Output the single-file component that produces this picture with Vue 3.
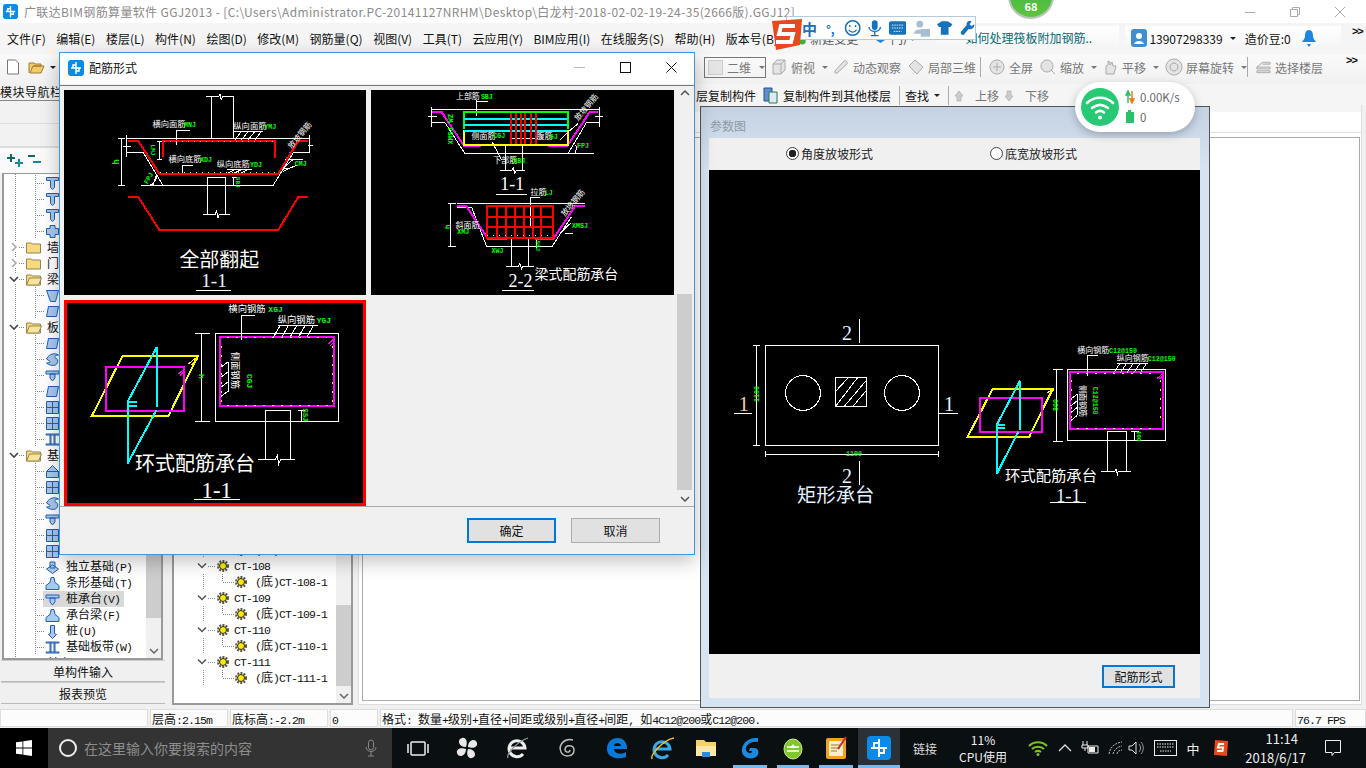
<template>
  <div class="app">
    <div class="titlebar">
      <svg class="logo" viewBox="0 0 16 16"><rect width="16" height="16" rx="3" fill="#0a8be8"/><path d="M8 2v12M3 8h10M8 5H5v3M8 11h3V8" fill="none" stroke="#fff" stroke-width="1.5"/></svg>
      <span class="title-text">广联达BIM钢筋算量软件 GGJ2013 - [C:\Users\Administrator.PC-20141127NRHM\Desktop\白龙村-2018-02-02-19-24-35(2666版).GGJ12]</span>
      <div class="win-btns">
        <svg width="12" height="12" viewBox="0 0 12 12"><path d="M1 6.500h10" stroke="#aaa"/></svg>
        <svg width="12" height="12" viewBox="0 0 12 12"><path d="M1.500 3.500h7v7h-7zM3.500 3.500v-2h7v7h-2" fill="none" stroke="#aaa"/></svg>
        <svg width="12" height="12" viewBox="0 0 12 12"><path d="M1 1l10 10M11 1L1 11" stroke="#aaa"/></svg>
      </div>
    </div>

    <div class="menubar">
      <span v-for="m in menus" :key="m" class="menu-item">{{ m }}</span>
      <span class="menu-item new-change">
        <svg width="14" height="14" viewBox="0 0 14 14"><path d="M2 1h8l2 2v9H2z" fill="#e8eef5" stroke="#8aa"/><circle cx="9" cy="10" r="3.500" fill="#3fae3a"/></svg>
        新建变更
      </span>
      <span class="menu-item portal">
        <svg width="11" height="12" viewBox="0 0 11 12"><path d="M1 1h9v7l-4.500 3L1 8z" fill="#1c86e0"/></svg>
        门户
      </span>
      <div class="news">如何处理筏板附加钢筋..</div>
      <div class="account">
        <svg width="16" height="18" viewBox="0 0 16 18"><rect width="16" height="18" rx="3" fill="#3f8fd0"/><circle cx="8" cy="7" r="3" fill="#fff"/><path d="M3 15c1-4 9-4 10 0z" fill="#fff"/></svg>
        <span class="phone">13907298339</span>
        <i class="caret"></i>
        <span class="beans">造价豆:0</span>
        <svg class="bell" width="14" height="18" viewBox="0 0 14 18"><path d="M7 1c-3 0-4 3-4 6 0 3-2 4-3 6h14c-1-2-3-3-3-6 0-3-1-6-4-6zM5 15h4l-2 3z" fill="#1c86e0"/></svg>
      </div>
      <span class="more">&gt;&gt;</span>
    </div>

    <div class="toolbar">
      <svg class="tool-new" width="14" height="16" viewBox="0 0 14 16"><path d="M1.500 1h8l3 3v11h-11z" fill="#fff" stroke="#777"/></svg>
      <svg class="tool-open" width="18" height="16" viewBox="0 0 18 16"><path d="M1 14V4h5l1 1h6v2H5L2 14h11l3-7H5" fill="#f2cb6b" stroke="#a07c2c"/></svg>
      <i class="caret"></i>
      <div class="combo"><span class="combo-box"></span><span>二维</span><i class="caret gray"></i></div>
      <div v-for="t in tools" :key="t.label" class="tool" :style="{ width: t.w + 'px' }">
        <svg width="18" height="18" viewBox="0 0 18 18"><path :d="t.icon" fill="#e4e4e4" stroke="#aaa"/></svg>
        <span>{{ t.label }}</span>
        <i v-if="t.caret" class="caret gray"></i>
        <b v-if="t.sep" class="sep"></b>
      </div>
      <span class="more">&gt;&gt;</span>
    </div>

    <div class="work">
      <aside class="nav">
        <div class="nav-title">模块导航栏</div>
        <div class="nav-band"></div>
        <div class="nav-band"></div>
        <div class="nav-tools">
          <svg width="40" height="18" viewBox="0 0 40 18">
            <path d="M7 3v8M3 7h8" stroke="#0b6b5e" stroke-width="2"/>
            <path d="M15 8v8M11 12h8" stroke="#118a9a" stroke-width="2"/>
            <path d="M24 5h7" stroke="#0b6b5e" stroke-width="2"/>
            <path d="M29 11h8" stroke="#118a9a" stroke-width="2"/>
          </svg>
        </div>
        <div class="nav-tree">
          <div v-for="r in navRows" :key="r.id" class="row" :class="{ child: !r.folder, active: r.active }">
            <template v-if="r.folder">
              <svg class="arrow" width="10" height="10" viewBox="0 0 10 10">
                <path :d="r.open ? 'M1 3l4 4 4-4' : 'M3 1l4 4-4 4'" fill="none" :stroke="r.open ? '#444' : '#aaa'" stroke-width="1.6"/>
              </svg>
              <span class="hline short"></span>
              <svg width="16" height="13" viewBox="0 0 16 13">
                <path d="M.5 12V2h5l1 1h8v9z" fill="#f6d980" stroke="#9a8450"/>
                <path v-if="r.open" d="M.5 12l3-7h12l-3 7z" fill="#fbe49c" stroke="#9a8450"/>
              </svg>
              <span class="row-text folder-text">{{ r.label }}</span>
            </template>
            <template v-else>
              <span class="hline"></span>
              <svg class="row-icon" width="15" height="15" viewBox="0 0 15 15"><path :d="r.icon" fill="#a9c9ee" stroke="#2160b4"/></svg>
              <span class="row-text"><span v-for="(s, i) in segs(r.label)" :key="i" :class="{ lat: s.lat }">{{ s.t }}</span></span>
            </template>
          </div>
          <div class="scroll nav-scroll"><i class="thumb"></i><svg width="10" height="6" viewBox="0 0 10 6"><path d="M1 1l4 4 4-4" fill="none" stroke="#666" stroke-width="1.5"/></svg></div>
        </div>
        <div class="nav-tab">单构件输入</div>
        <div class="nav-tab">报表预览</div>
      </aside>

      <main class="main">
        <div class="toolbar2">
          <span class="t2-first">层复制构件</span>
          <svg class="copy-icon" width="15" height="17" viewBox="0 0 15 17"><path d="M1 1h8v13H1z" fill="#5d8fd2" stroke="#2c4f86"/><path d="M6 5h8v11H6z" fill="#dde9f7" stroke="#2a7a4a"/></svg>
          <span>复制构件到其他楼层</span>
          <b class="sep2"></b>
          <span>查找</span><i class="caret"></i>
          <b class="sep2"></b>
          <svg width="10" height="12" viewBox="0 0 10 12"><path d="M5 1l4 5H7v5H3V6H1z" fill="#ccc" stroke="#bbb"/></svg>
          <span class="disabled">上移</span>
          <svg width="10" height="12" viewBox="0 0 10 12"><path d="M5 11l4-5H7V1H3v5H1z" fill="#ccc" stroke="#bbb"/></svg>
          <span class="disabled">下移</span>
        </div>
        <div class="content">
          <div class="tree2">
            <div v-for="c in ctRows" :key="c.label" class="ct-row" :class="{ sub: c.sub }">
              <svg v-if="!c.sub" class="ct-caret" width="10" height="8" viewBox="0 0 10 8"><path d="M1 1.500l4 4 4-4" fill="none" stroke="#555" stroke-width="1.5"/></svg>
              <span class="ct-dots"></span>
              <svg width="12" height="12" viewBox="0 0 12 12"><circle cx="6" cy="6" r="3.500" fill="#ffe900" stroke="#222" stroke-width="1"/><circle cx="6" cy="6" r="5" fill="none" stroke="#554" stroke-width="2" stroke-dasharray="2 1.200"/></svg>
              <span class="ct-label"><span v-for="(s, i) in segs(c.label)" :key="i" :class="{ lat: s.lat }">{{ s.t }}</span></span>
            </div>
            <div class="scroll ct-scroll"><i class="thumb"></i><svg width="10" height="6" viewBox="0 0 10 6"><path d="M1 1l4 4 4-4" fill="none" stroke="#666" stroke-width="1.5"/></svg></div>
          </div>
          <div class="canvas">
            <div class="canvas-top"></div>
            <div class="canvas-box"></div>
          </div>
        </div>
      </main>
    </div>

    <div class="statusbar">
      <div v-for="c in statusCells" :key="c.cls" class="cell" :class="c.cls">
        <span v-for="(s, i) in segs(c.text)" :key="i" :class="{ lat: s.lat }">{{ s.t }}</span>
      </div>
    </div>

    <div class="taskbar">
      <div class="start">
        <svg width="16" height="16" viewBox="0 0 16 16"><path d="M0 2.300l6.500-.9v6.200H0zM7.300 1.300L16 0v7.600H7.300zM0 8.400h6.500v6.200L0 13.700zM7.300 8.400H16V16l-8.700-1.300z" fill="#fff"/></svg>
      </div>
      <div class="search">
        <svg width="20" height="20" viewBox="0 0 20 20"><circle cx="10" cy="10" r="8" fill="none" stroke="#eee" stroke-width="2"/></svg>
        <span class="search-text">在这里输入你要搜索的内容</span>
        <svg class="mic" width="12" height="18" viewBox="0 0 12 18"><rect x="3.500" y="1" width="5" height="10" rx="2.500" fill="none" stroke="#888"/><path d="M1 8c0 6 10 6 10 0M6 13v4M3 17h6" fill="none" stroke="#888"/></svg>
      </div>
      <div class="task-icons">
        <div v-for="t in taskIcons" :key="t.id" class="task-icon" :class="{ running: t.running, current: t.current }" :style="{ width: t.w + 'px' }">
          <svg width="26" height="26" viewBox="0 0 26 26" v-html="t.svg"></svg>
        </div>
      </div>
      <div class="tray">
        <span class="tray-link">链接</span>
        <div class="cpu"><span>11%</span><span>CPU使用</span></div>
        <svg class="t1" width="20" height="16" viewBox="0 0 20 16"><path d="M1 6c5-5 13-5 18 0M4 9c3-3 9-3 12 0M7 12c2-1.500 4-1.500 6 0" fill="none" stroke="#7cc320" stroke-width="2"/><circle cx="10" cy="14.500" r="1.500" fill="#7cc320"/></svg>
        <svg class="t2" width="14" height="10" viewBox="0 0 14 10"><path d="M1 8l6-6 6 6" fill="none" stroke="#ddd" stroke-width="1.300"/></svg>
        <svg class="t3" width="18" height="16" viewBox="0 0 18 16"><path d="M2 1v4M6 1v4M1 5h6v3H1zM4 8v3M7 6h10v7H7z" fill="none" stroke="#eee"/><rect x="8" y="7" width="6" height="5" fill="#eee"/></svg>
        <svg class="t4" width="18" height="16" viewBox="0 0 18 16"><path d="M2 14C3 7 8 3 15 2M6 14c1-4 4-7 9-8M10 14c0-2 2-4 5-4" fill="none" stroke="#bbb" stroke-dasharray="2 1"/></svg>
        <svg class="t5" width="16" height="16" viewBox="0 0 16 16"><path d="M1 6h3l4-4v12l-4-4H1z" fill="none" stroke="#ddd"/><path d="M11 4c2 2 2 6 0 8M13 2c3 3 3 9 0 12" fill="none" stroke="#999"/></svg>
        <svg class="t6" width="23" height="16" viewBox="0 0 23 16"><rect x=".5" y=".5" width="22" height="15" fill="none" stroke="#eee"/><path d="M3 4h17M3 7h17M6 11h11" stroke="#eee" stroke-dasharray="1.500 1"/></svg>
        <span class="tray-ime">中</span>
        <svg class="t7" width="16" height="18" viewBox="0 0 16 18"><path d="M2 1l13 1-1 15-13-1z" fill="#e8481c"/><path d="M11 5H6L5 8.500h5L9.500 12H4" fill="none" stroke="#fff" stroke-width="2"/></svg>
        <div class="clock"><span class="clock-time">11:14</span><span>2018/6/17</span></div>
        <svg class="notify" width="16" height="17" viewBox="0 0 16 17"><path d="M.5.500h15v12H9.500L7 15.500v-3H.5z" fill="none" stroke="#eee"/></svg>
      </div>
    </div>

    <!-- floating bits on top of the main window -->
    <div class="badge"><span>68</span></div>

    <div class="ime">
      <svg class="ime-logo" width="34" height="36" viewBox="0 0 34 36"><path d="M2 4l30-2-2 26L6 33z" fill="#e8481c"/><path d="M25 9H11L9 17h14l-2 8H6" fill="none" stroke="#fff" stroke-width="4"/></svg>
      <span class="ime-zh">中</span>
      <span class="ime-punct">°,</span>
      <svg width="18" height="18" viewBox="0 0 18 18"><circle cx="9" cy="9" r="7.500" fill="none" stroke="#1572bd" stroke-width="1.600"/><path d="M6 6v2M12 6v2M5 11c2 3 6 3 8 0" fill="none" stroke="#1572bd" stroke-width="1.400"/></svg>
      <svg width="14" height="18" viewBox="0 0 14 18"><rect x="4" y="1" width="6" height="10" rx="3" fill="#1572bd"/><path d="M1 8c0 6 12 6 12 0M7 13v4M3 17h8" fill="none" stroke="#1572bd" stroke-width="1.400"/></svg>
      <svg width="18" height="14" viewBox="0 0 18 14"><rect width="18" height="14" rx="2" fill="#1572bd"/><path d="M3 4h12M3 7h12M5 10.500h8" stroke="#fff" stroke-dasharray="1.500 1"/></svg>
      <svg width="18" height="18" viewBox="0 0 18 18"><circle cx="7" cy="5" r="3.500" fill="#a7bfd2"/><path d="M1 15c0-6 12-6 12 0z" fill="#a7bfd2"/><rect x="8" y="10" width="10" height="8" fill="#a7bfd2"/></svg>
      <svg width="16" height="16" viewBox="0 0 16 16"><path d="M5 1h6l5 3-2 3h-2v8H4V7H2L0 4z" fill="#1572bd"/></svg>
      <svg width="16" height="16" viewBox="0 0 16 16"><path d="M15 4l-3 2-2-2 2-3c-3-1-6 1-5 4L1 12c-1 2 1 4 3 3l5-6c4 1 6-2 6-5z" fill="#1572bd"/></svg>
    </div>

    <div class="net">
      <div class="net-circle">
        <svg width="30" height="26" viewBox="0 0 30 26"><path d="M2 9c7-7 19-7 26 0M7 14c5-4 11-4 16 0M11 18.500c2.500-2 5.500-2 8 0" fill="none" stroke="#fff" stroke-width="2.600" stroke-linecap="round"/><circle cx="15" cy="23.500" r="2" fill="#fff"/></svg>
      </div>
      <div class="net-info">
        <div class="net-line"><svg width="10" height="14" viewBox="0 0 10 14"><path d="M3 3v10M1 5l2-4 2 4z" stroke="#27c26c" fill="#27c26c" stroke-width="1.500"/><path d="M7 1v10M5 9l2 4 2-4z" stroke="#f07a1e" fill="#f07a1e" stroke-width="1.500"/></svg><span>0.00K/s</span></div>
        <div class="net-line"><svg width="10" height="14" viewBox="0 0 10 14"><rect x="1" y="2" width="8" height="11" fill="#27c26c"/><rect x="3" width="3" height="2" fill="#27c26c"/></svg><span>0</span></div>
      </div>
    </div>

    <section class="param">
      <div class="param-title">参数图</div>
      <div class="param-body">
        <div class="radios">
          <label class="radio on"><i></i>角度放坡形式</label>
          <label class="radio"><i></i>底宽放坡形式</label>
        </div>
        <svg class="param-draw" viewBox="-33 -420 1473 1452">
          <path v-for="(p, i) in paramDraw.paths" :key="i" :d="p[1]" :class="['ln', p[0]]" />
          <text v-for="(t, i) in paramDraw.texts" :key="'t' + i" :x="t.x" :y="t.y" :font-size="t.s" :class="t.c" :text-anchor="t.a" :transform="t.r ? `rotate(${t.r} ${t.x} ${t.y})` : null">{{ t.v }}</text>
        </svg>
        <div class="param-foot"><button class="btn primary small">配筋形式</button></div>
      </div>
    </section>

    <section class="dialog">
      <header class="dlg-head">
        <svg class="logo" viewBox="0 0 16 16"><rect width="16" height="16" rx="3" fill="#0a8be8"/><path d="M8 2v12M3 8h10M8 5H5v3M8 11h3V8" fill="none" stroke="#fff" stroke-width="1.500"/></svg>
        <span class="dlg-title">配筋形式</span>
        <div class="dlg-btns">
          <svg width="11" height="11" viewBox="0 0 11 11"><path d="M0 5.500h11" stroke="#bbb"/></svg>
          <svg width="11" height="11" viewBox="0 0 11 11"><rect x=".5" y=".5" width="10" height="10" fill="none" stroke="#111"/></svg>
          <svg width="11" height="11" viewBox="0 0 11 11"><path d="M.5.500l10 10M10.500.500l-10 10" stroke="#111"/></svg>
        </div>
      </header>
      <div class="dlg-body">
        <div class="gallery">
          <div v-for="(d, n) in drawings" :key="n" class="shape" :class="{ picked: d.picked }">
            <svg :viewBox="d.view">
              <path v-for="(p, i) in d.paths" :key="i" :d="p[1]" :class="['ln', p[0]]" />
              <text v-for="(t, i) in d.texts" :key="'t' + i" :x="t.x" :y="t.y" :font-size="t.s" :class="t.c" :text-anchor="t.a" :transform="t.r ? `rotate(${t.r} ${t.x} ${t.y})` : null">{{ t.v }}</text>
            </svg>
          </div>
        </div>
        <div class="dlg-scroll">
          <svg width="10" height="6" viewBox="0 0 10 6"><path d="M1 5l4-4 4 4" fill="none" stroke="#555" stroke-width="1.500"/></svg>
          <i class="dlg-thumb"></i>
          <svg width="10" height="6" viewBox="0 0 10 6"><path d="M1 1l4 4 4-4" fill="none" stroke="#555" stroke-width="1.500"/></svg>
        </div>
      </div>
      <footer class="dlg-foot">
        <button class="btn primary">确定</button>
        <button class="btn">取消</button>
      </footer>
    </section>
  </div>
</template>

<script setup>
const menus = ['文件(F)', '编辑(E)', '楼层(L)', '构件(N)', '绘图(D)', '修改(M)', '钢筋量(Q)', '视图(V)', '工具(T)', '云应用(Y)', 'BIM应用(I)', '在线服务(S)', '帮助(H)', '版本号(B)']

const tools = [
  { label: '俯视', w: 62, caret: true, icon: 'M3 6l4-4h8v10l-4 4H3zM3 6h8v10M11 6l4-4' },
  { label: '动态观察', w: 75, icon: 'M3 13l9-10c2-1 4 1 3 3L5 15c-2 1-3-1-2-2z' },
  { label: '局部三维', w: 81, sep: true, icon: 'M2 8l6-6 8 7-6 7z' },
  { label: '全屏', w: 51, icon: 'M9 2a7 7 0 1 0 .01 0zM9 5v8M5 9h8' },
  { label: '缩放', w: 62, caret: true, icon: 'M8 2a6 6 0 1 0 .01 0zM12 12l4 4' },
  { label: '平移', w: 64, caret: true, icon: 'M5 16V8l2-1V3l2 1v3l2-3 1 4 3 0-2 8z' },
  { label: '屏幕旋转', w: 90, caret: true, sep: true, icon: 'M9 1a8 8 0 1 0 .01 0zM9 5a4 4 0 1 0 .01 0z' },
  { label: '选择楼层', w: 72, icon: 'M2 9l6-5h8v2H8M2 9h14v2H2zM2 13h14v2H2z' },
]

const pile = 'M1.500 1.500h12v3h-4v7l-2 2-2-2v-7h-4z'
const gear = 'M5 1.500h5v3h3.500v6H10v3H5v-3H1.500v-6H5z'
const plate = 'M3.500 2.500h10l-2 10h-10z'
const beam = 'M1.500 2.500h12l-3 11h-5z'
const grid = 'M1.500 1.500h12v12h-12zM1.500 7.500h12M7.500 1.500v12'
const wave = 'M1.500 7c3-6 9-6 12-4-3 0-5 2-3 3 3 1 3 5 0 7-3 1-7 0-9-2 3 0 5-1 3-2z'
const step = 'M7.500 1.500l6 6v6h-12v-6zM1.500 7.500h12'
const found = 'M1.500 9l6-4 6 4-6 4.500zM5 2h5v6H5z'
const strip = 'M6 1.500h3l1 5 4 3v4h-13v-4l4-3z'
const cap = 'M1 3h13v3H1zM5 6h5v4l-2.500 3L5 10z'
const single = 'M5.500 1.500h4v8l2 1-4 4-4-4 2-1z'
const band = 'M1 2h13v1H1zM1 12h13v1H1zM5 3h1v9H5zM9 3h1v9H9z'

const navRows = [
  { id: 1, icon: pile }, { id: 2, icon: pile }, { id: 3, icon: pile }, { id: 4, icon: gear },
  { id: 5, folder: true, label: '墙' }, { id: 6, folder: true, label: '门窗洞' },
  { id: 7, folder: true, open: true, label: '梁' }, { id: 8, icon: beam }, { id: 9, icon: plate },
  { id: 10, folder: true, open: true, label: '板' }, { id: 11, icon: plate }, { id: 12, icon: wave }, { id: 13, icon: cap },
  { id: 14, icon: plate }, { id: 15, icon: grid }, { id: 16, icon: grid }, { id: 17, icon: band },
  { id: 18, folder: true, open: true, label: '基础' }, { id: 19, icon: step }, { id: 20, icon: grid }, { id: 21, icon: wave },
  { id: 22, icon: cap }, { id: 23, icon: grid }, { id: 24, icon: grid },
  { id: 25, icon: found, label: '独立基础(P)' }, { id: 26, icon: strip, label: '条形基础(T)' },
  { id: 27, icon: cap, label: '桩承台(V)', active: true }, { id: 28, icon: strip, label: '承台梁(F)' },
  { id: 29, icon: single, label: '桩(U)' }, { id: 30, icon: band, label: '基础板带(W)' },
  { id: 31, folder: true, label: '其它' },
]

const ctRows = [
  { label: '(底)CT-107-1', sub: true },
  { label: 'CT-108' }, { label: '(底)CT-108-1', sub: true },
  { label: 'CT-109' }, { label: '(底)CT-109-1', sub: true },
  { label: 'CT-110' }, { label: '(底)CT-110-1', sub: true },
  { label: 'CT-111' }, { label: '(底)CT-111-1', sub: true },
]

const statusCells = [
  { cls: 's1', text: '' },
  { cls: 's2', text: '层高:2.15m' },
  { cls: 's3', text: '底标高:-2.2m' },
  { cls: 's4', text: '0' },
  { cls: 's5', text: '格式: 数量+级别+直径+间距或级别+直径+间距, 如4C12@200或C12@200.' },
  { cls: 's6', text: '76.7 FPS' },
]

// SimSun's half-width latin: split so latin runs can be set narrower than the CJK ones
function segs(s) {
  return (s || '').match(/[\x00-\x7f]+|[^\x00-\x7f]+/g)?.map((t) => ({ t, lat: /^[\x00-\x7f]/.test(t) })) ?? []
}

const icon = {
  view: '<rect x="6" y="7" width="14" height="13" rx="1" fill="none" stroke="#eee" stroke-width="1.500"/><path d="M3 9v9M23 9v9" stroke="#eee" stroke-width="1.500"/>',
  fan: '<path d="M12 12C4 12 3 4 8 3c4-1 6 4 4 9zM14 12c0-8 8-9 9-4 1 4-4 6-9 4zM14 14c8 0 9 8 4 9-4 1-6-4-4-9zM12 14c0 8-8 9-9 4-1-4 4-6 9-4z" fill="#e8e8e8"/>',
  ie: '<path d="M6 13h15A8 8 0 1 0 19 19" fill="none" stroke="#eee" stroke-width="3"/><path d="M4 23C2 19 14 6 24 3" fill="none" stroke="#999" stroke-width="1.300"/>',
  swirl: '<path d="M19 5C10 3 4 10 7 17c3 6 13 5 13-2 0-5-8-6-9-1 0 4 5 4 5 1" fill="none" stroke="#bbb" stroke-width="1.500"/>',
  edge: '<path d="M4 14C4 6 10 3 15 3c6 0 9 5 9 11H11c0 5 8 6 12 3v5c-8 3-19 1-19-8z" fill="#0a7ad6"/><path d="M11 11h7c0-4-7-4-7 0z" fill="#0c0f12"/>',
  iebl: '<path d="M6 14h15A8 8 0 1 0 19 20" fill="none" stroke="#3aa7e8" stroke-width="3"/><path d="M3 24C1 20 14 5 25 3" fill="none" stroke="#e8c030" stroke-width="1.600"/>',
  folder: '<path d="M3 5h8l2 2h10v14H3z" fill="#f6d266"/><rect x="3" y="11" width="20" height="10" fill="#fbe8a8"/><rect x="9" y="17" width="8" height="5" fill="#2a8ce0"/>',
  g: '<path d="M21 3C10 2 4 10 5 17c1 6 9 8 14 5 4-3 3-9-2-9h-4l-1 3h3c1 3-5 3-6-1-1-4 4-9 12-8z" fill="#1a8ae0"/>',
  green: '<ellipse cx="13" cy="14" rx="9" ry="10" fill="#7ec72c" stroke="#cde7a0"/><path d="M7 12h12M7 16h12" stroke="#fff" stroke-width="1.500"/><path d="M10 13l3-4 3 4z" fill="#fff"/>',
  note: '<rect x="3" y="3" width="20" height="21" rx="2" fill="#f2a31e"/><rect x="6" y="6" width="14" height="15" fill="#fbeec8"/><path d="M8 10h9M8 13h9M8 16h6" stroke="#a37b2a"/><path d="M15 14L23 2" stroke="#b33" stroke-width="2"/>',
  app: '<rect x="1" y="1" width="24" height="24" rx="4" fill="#0a8be8"/><path d="M13 4v18M5 13h16M13 8H8v5M13 18h5v-5" fill="none" stroke="#fff" stroke-width="2"/>',
}

const taskIcons = [
  { id: 1, w: 47, svg: icon.view },
  { id: 2, w: 51, svg: icon.fan },
  { id: 3, w: 50, svg: icon.ie },
  { id: 4, w: 50, svg: icon.swirl },
  { id: 5, w: 48, svg: icon.edge },
  { id: 6, w: 44, svg: icon.iebl },
  { id: 7, w: 44, svg: icon.folder },
  { id: 8, w: 44, svg: icon.g, running: true },
  { id: 9, w: 42, svg: icon.green, running: true },
  { id: 10, w: 44, svg: icon.note, running: true },
  { id: 11, w: 42, svg: icon.app, running: true, current: true },
]

const T = (x, y, s, c, v, a, r) => ({ x, y, s, c, v, a, r })

const drawings = [
  {
    view: '12 14 906 616',
    paths: [
      ['w', 'M438 35H475L480 27L484 43L488 35H522M453 35V160M520 35V160M200 160H748M200 150V215M748 150V200M200 203H250L308 300M243 300H640L700 203H750'],
      ['w', 'M175 160H195M175 302H195M183 160V302M290 168H305M298 168V222M290 222H305M350 135H390M350 135V178M367 240H400M367 240V270'],
      ['w', 'M520 170L545 138M540 170L565 138M560 170L585 138M580 170L605 138M520 138H610M500 265L525 253M520 265L545 253M540 265L565 253M500 253H575'],
      ['w', 'M443 276V388M498 276V388M443 276H498M428 388H465L470 378L474 398L478 388H510M520 278V302M515 278H530M278 300L290 268M270 300Q290 290 292 268'],
      ['w', 'M660 258L700 222M670 258L710 240M676 222H730M660 250H690'],
      ['w', 'M190 185H212M745 180H760M408 616H512'],
      ['r t', 'M205 168H235L298 266H655L715 168H745M308 215V168H645V217'],
      ['r t', 'M205 336H235L298 435H655L715 336H743'],
      ['y dots', 'M312 170H640M300 262H652'],
      ['m dots', 'M660 250L690 200'],
    ],
    texts: [
      T(277, 126, 25, 'tw', '横向面筋'), T(372, 126, 20, 'tg', 'MNJ'),
      T(520, 130, 25, 'tw', '纵向面筋'), T(613, 130, 20, 'tg', 'YMJ'),
      T(325, 231, 25, 'tw', '横向底筋'), T(420, 231, 20, 'tg', 'XDJ'),
      T(470, 246, 25, 'tw', '纵向底筋'), T(570, 246, 20, 'tg', 'YDJ'),
      T(695, 192, 24, 'tw', '放坡钢筋', null, -50),
      T(705, 243, 20, 'tg', 'CMJ'), T(272, 178, 18, 'tg', 'LMJ', null, 90),
      T(178, 238, 26, 'tg', 'h', null, -90), T(262, 298, 20, 'tg', 'FPJ', null, -60),
      T(528, 275, 18, 'tg', 'SBJ', null, 90),
      T(478, 545, 60, 'tw big', '全部翻起', 'middle'),
      T(462, 605, 58, 'tb serif', '1-1', 'middle'),
    ],
  },
  {
    view: '9 14 908 616',
    paths: [
      ['w', 'M190 74H695M190 65V125M695 65V125M190 112H230L290 205H678M600 205L655 112H695M180 95H205M680 95H705'],
      ['w', 'M325 45V92M325 50H360M372 170L400 225M412 182V255M463 182V255M395 256H430L435 248L440 264L445 256H470M382 328H476'],
      ['w', 'M425 160H510M620 205Q628 190 622 178M600 140L630 115M575 165L600 140'],
      ['m t', 'M192 80H220L285 178M690 80H665L600 178M285 182H338M540 182H600'],
      ['gr t', 'M288 130V80H600V130'],
      ['y t', 'M288 135V178H600V135'],
      ['c t', 'M288 102H598M288 120H598M288 138H598'],
      ['r t', 'M428 82V175M443 82V175M458 82V175M472 82V175M488 82V175M504 82V175'],
      ['w', 'M265 355H652M240 355H262M240 485H262M248 355V485M265 366H310L355 484H552L610 395M358 484H478M430 460V545M480 460V545M413 545H450L455 535L460 552L464 545H498M430 460H480M505 460V490M402 616H497'],
      ['w', 'M487 430V337H515M575 445L610 412M590 445H615'],
      ['m t', 'M267 362H293L360 462H415M500 462H555L622 362H650'],
      ['r t', 'M355 362H556V458H355ZM385 362V458M412 362V458M440 362V458M468 362V458M495 362V458M520 362V458M355 395H556M355 425H556'],
      ['y dots', 'M355 452H556'],
    ],
    texts: [
      T(263, 42, 24, 'tw', '上部筋'), T(338, 42, 20, 'tg', 'SBJ'),
      T(255, 178, 22, 'tg', 'XMSJ WZ', null, -90),
      T(310, 160, 24, 'tw', '侧面筋'), T(375, 158, 20, 'tg', 'CGJ'),
      T(505, 162, 24, 'tw', '腹筋'), T(545, 160, 20, 'tg', 'GJ'),
      T(627, 189, 20, 'tg', 'FPJ'),
      T(375, 234, 24, 'tw', '下部筋'), T(435, 234, 20, 'tg', 'XBJ'),
      T(630, 108, 24, 'tw', '放坡钢筋', null, -50),
      T(432, 314, 54, 'tw serif', '1-1', 'middle'),
      T(487, 330, 24, 'tw', '拉筋'), T(530, 330, 20, 'tg', 'LJ'),
      T(590, 395, 24, 'tw', '放坡钢筋', null, -50),
      T(262, 428, 24, 'tw', '斜面筋'), T(267, 448, 20, 'tg', 'XMJ'),
      T(612, 428, 20, 'tg', 'XMSJ'), T(370, 503, 20, 'tg', 'XWJ'),
      T(244, 432, 22, 'tg', 'h', null, -90), T(505, 466, 18, 'tg', 'SSJ', null, 90),
      T(457, 605, 54, 'tw serif', '2-2', 'middle'),
      T(625, 583, 42, 'tw big', '梁式配筋承台', 'middle'),
    ],
  },
  {
    view: '12 14 906 616',
    picked: true,
    paths: [
      ['y t', 'M187 182H413L325 362H95Z'],
      ['m t', 'M138 215H373V345H138Z'],
      ['c t', 'M290 155V335M205 318H232M205 330H232'],
      ['c t', 'M290 155L203 318V503L290 342'],
      ['y', 'M385 205L410 185M395 208L412 190M405 190L413 182'],
      ['m', 'M355 235L372 220M360 240L374 225'],
      ['w', 'M425 112V378M405 112H450M405 378H450M466 112H836V377H466Z'],
      ['m t', 'M480 123H822V332H480Z'],
      ['m', 'M805 145L822 128M812 150L824 136'],
      ['y dots2', 'M483 150V320M818 150V320M500 329H810'],
      ['w dots2', 'M500 125H800'],
      ['w', 'M545 133V60H585M640 125L660 90M665 125L685 90M690 125L710 90M715 125L735 90M740 125L760 90M655 90H775'],
      ['w', 'M482 215L505 198M482 245L505 228M482 275L505 258M482 303L505 286M505 198V288'],
      ['w', 'M615 343H692M615 343V492M692 343V492M595 492H645L652 480L656 505L662 492H705M725 345V378M715 343H735M402 612H540'],
    ],
    texts: [
      T(505, 50, 28, 'tw', '横向钢筋'), T(625, 50, 24, 'tg', 'XGJ'),
      T(653, 82, 28, 'tw', '纵向钢筋'), T(770, 82, 24, 'tg', 'YGJ'),
      T(516, 168, 28, 'tw', '侧面钢筋', null, 90),
      T(560, 235, 24, 'tg', 'CGJ', null, 90),
      T(418, 235, 24, 'tg', 'h', null, 90),
      T(728, 338, 22, 'tg', 'SSJ', null, 90),
      T(405, 526, 60, 'tw big', '环式配筋承台', 'middle'),
      T(470, 606, 68, 'tw serif', '1-1', 'middle'),
    ],
  },
]

const paramDraw = {
  paths: [
    ['w', 'M136 106H656V406H136ZM346 202H440V290H346Z'],
    ['w', 'M197 249A52 52 0 1 1 301 249A52 52 0 1 1 197 249ZM494 249A52 52 0 1 1 598 249A52 52 0 1 1 494 249Z'],
    ['w', 'M346 245L384 204M346 290L412 204M372 290L440 210M398 290L440 240'],
    ['w', 'M418 28V98M418 453V525M42 310H96M657 310H714'],
    ['w', 'M100 106H120M110 106V406M100 406H120M136 432H656M136 424V440M656 424V440'],
    ['y t', 'M818 237H998L928 380H743Z'],
    ['m t', 'M780 264H967V365H780Z'],
    ['c t', 'M900 212V360M832 345H855M832 355H855'],
    ['c t', 'M900 212L830 345V492L895 365'],
    ['y', 'M980 250L998 237M986 254L1000 240'],
    ['w', 'M1010 178V393M1000 178H1028M1000 393H1028M1042 178H1337V391H1042Z'],
    ['m t', 'M1050 187H1328V356H1050Z'],
    ['m', 'M1312 205L1328 190M1318 208L1330 195'],
    ['y dots2', 'M1322 210V340M1053 210V340'],
    ['w dots2', 'M1070 354H1310M1070 189H1300'],
    ['w', 'M1102 197V137H1135M1180 190L1200 160M1200 190L1220 160M1220 190L1240 160M1240 190L1260 160M1260 190L1280 160M1190 160H1285'],
    ['w', 'M1052 268L1072 252M1052 288L1072 272M1052 308L1072 292M1052 332L1072 316M1072 252V316'],
    ['w', 'M1162 364H1220M1162 364V484M1220 364V484M1143 484H1184L1188 476L1192 494L1195 484H1232M1242 366V393M1234 364H1256M990 578H1097'],
  ],
  texts: [
    T(381, 90, 60, 'tb serif', '2', 'middle'), T(381, 520, 60, 'tb serif', '2', 'middle'),
    T(71, 302, 60, 'ttan serif', '1', 'middle'), T(687, 302, 60, 'tb serif', '1', 'middle'),
    T(116, 276, 20, 'tg', '1100', null, -90), T(402, 439, 20, 'tg', '1100', 'middle'),
    T(347, 576, 58, 'tb big', '矩形承台', 'middle'),
    T(1072, 128, 24, 'tw', '横向钢筋'), T(1167, 128, 20, 'tg', 'C12@150'),
    T(1190, 152, 24, 'tw', '纵向钢筋'), T(1283, 152, 20, 'tg', 'C12@150'),
    T(1014, 303, 20, 'tg', '800', null, -90),
    T(1080, 225, 24, 'tw', '侧面钢筋', null, 90),
    T(1118, 230, 20, 'tg', 'C12@150', null, 90),
    T(1250, 362, 18, 'tg', '100', null, 90),
    T(993, 512, 46, 'tw big', '环式配筋承台', 'middle'),
    T(1045, 577, 56, 'tb serif', '1-1', 'middle'),
  ],
}
</script>

<style scoped>
.app {
  position: relative;
  width: 1366px;
  height: 768px;
  overflow: hidden;
  display: flex;
  flex-direction: column;
  background: #f0f0f0;
  font-family: "Noto Sans CJK SC", "Liberation Sans", sans-serif;
  font-size: 12px;
  color: #111;
}
.logo { width: 15px; height: 15px; flex: none; }
.titlebar {
  height: 23px;
  display: flex;
  align-items: center;
  padding: 0 0 0 3px;
  background: #fff;
  color: #8a8a8a;
}
.title-text { margin-left: 6px; white-space: nowrap; letter-spacing: .36px; }
.win-btns { margin-left: auto; display: flex; gap: 33px; padding-right: 20px; }

.menubar {
  height: 31px;
  display: flex;
  align-items: center;
  gap: 10.500px;
  padding: 0 0 1px 7px;
  box-sizing: border-box;
  background: #f5f5f5;
  white-space: nowrap;
}
.menu-item { display: inline-flex; align-items: center; gap: 3px; }
.new-change { margin-left: 5px; color: #555; }
.portal { margin-left: 6px; color: #555; gap: 5px; }
.news {
  margin-left: 11px;
  width: 183px;
  height: 24px;
  flex: none;
  line-height: 24px;
  padding-left: 29px;
  box-sizing: border-box;
  color: #0a6a72;
  background: linear-gradient(#fff, #f4f4f4);
}
.account {
  margin-left: -4.500px;
  width: 216px;
  height: 24px;
  flex: none;
  display: flex;
  align-items: center;
  box-sizing: border-box;
  padding-left: 6px;
  gap: 4px;
  background: linear-gradient(#fff, #f4f4f4);
}
.phone { margin-left: -2px; }
.account .caret { margin: 0 5px 0 3px; }
.bell { margin-left: 7px; }
.more {
  font-family: "Liberation Sans", sans-serif;
  font-size: 11px;
  font-weight: 700;
  letter-spacing: -1px;
  line-height: 1;
  position: relative;
  top: -7px;
  color: #111;
}
.caret {
  display: inline-block;
  width: 0;
  height: 0;
  border: 3px solid transparent;
  border-top: 3px solid #222;
  border-bottom-width: 0;
}
.caret.gray { border-top-color: #777; }

.toolbar {
  height: 30px;
  display: flex;
  align-items: center;
  padding: 0 0 4px 6px;
  box-sizing: border-box;
  background: linear-gradient(#fafafa, #f1f1f1);
  color: #777;
  white-space: nowrap;
}
.tool-open { margin-left: 8px; }
.toolbar > .caret { margin-left: 4px; }
.toolbar .more { margin-left: 23px; }
.combo {
  margin-left: 648px;
  width: 62px;
  height: 21px;
  flex: none;
  box-sizing: border-box;
  border: 1px solid #777;
  display: flex;
  align-items: center;
  gap: 4px;
  padding-left: 3px;
}
.combo .caret { margin-left: 4px; }
.combo-box { width: 13px; height: 13px; background: #e4e4e4; border: 1px solid #ccc; }
.tool { display: flex; flex: none; align-items: center; gap: 3px; box-sizing: border-box; padding-left: 4px; position: relative; }
.tool .caret { margin-left: 4px; }
.sep { position: absolute; right: 3px; top: -1px; height: 20px; width: 1px; background: #aaa; }

.work { flex: 1; min-height: 0; display: flex; }
.nav { width: 165px; flex: none; display: flex; flex-direction: column; font-family: "Noto Sans CJK SC", sans-serif; }
.lat { font-family: "Liberation Mono", monospace; font-size: 11.500px; letter-spacing: -.9px; }
.nav-title { height: 16px; line-height: 16px; border-bottom: 1px solid #888; letter-spacing: .5px; }
.nav-band { height: 23px; box-sizing: border-box; border-bottom: 1px solid #ddd; background: #f2f2f2; }
.nav-tools { height: 26px; box-sizing: border-box; padding: 3px 0 0 4px; background: #fafafa; border-top: 1px solid #ddd; }
.nav-tree {
  height: 487px;
  margin-left: 2px;
  width: 161px;
  box-sizing: border-box;
  padding-top: 1px;
  border: 1px solid #999;
  border-width: 1px 2px 2px 2px;
  background: #fff linear-gradient(to bottom, #888 50%, transparent 50%) 11px 0 / 1px 2px repeat-y;
  position: relative;
  overflow: hidden;
}
.row { height: 16px; line-height: 16px; display: flex; align-items: center; padding-left: 5px; white-space: nowrap; }
.row.child {
  padding-left: 31px;
  background: linear-gradient(to bottom, #888 50%, transparent 50%) 31px 0 / 1px 2px repeat-y;
}
.row.child.active {
  background:
    linear-gradient(to bottom, #888 50%, transparent 50%) 31px 0 / 1px 2px repeat-y,
    linear-gradient(#d9d9d9, #d9d9d9) 39px 0 / 81px 100% no-repeat;
}
.arrow { background: #fff; flex: none; }
.hline { width: 10px; height: 1px; flex: none; background: linear-gradient(to right, #888 50%, transparent 50%) 0 0 / 2px 1px repeat-x; }
.hline.short { width: 5px; margin-right: 2px; }
.row-icon { flex: none; margin-right: 6px; }
.folder-text { margin-left: 5px; }
.nav-tab {
  height: 21px;
  line-height: 21px;
  text-align: center;
  margin-left: 1px;
  border-top: 1px solid #ccc;
  background: #f0f0f0;
  box-shadow: inset 0 -1px #bbb;
}
.scroll {
  position: absolute;
  right: 0;
  top: 0;
  bottom: 0;
  width: 15px;
  background: #f0f0f0;
  display: flex;
  flex-direction: column;
  align-items: center;
  justify-content: flex-end;
  padding-bottom: 4px;
  box-sizing: border-box;
}
.thumb { position: absolute; left: 0; right: 0; background: #cdcdcd; }
.nav-scroll .thumb { top: 100px; bottom: 40px; }

.main { flex: 1; min-width: 0; display: flex; flex-direction: column; }
.toolbar2 {
  height: 21px;
  display: flex;
  align-items: center;
  gap: 5px;
  padding: 2px 0 0 531px;
  box-sizing: border-box;
  white-space: nowrap;
  background: #f5f5f5;
}
.copy-icon { margin-left: 2px; }
.sep2 { width: 1px; height: 19px; background: #aaa; margin-left: 3px; }
.disabled { color: #777; margin-left: 6px; }
.content { flex: 1; min-height: 0; display: flex; padding-bottom: 3px; }
.tree2 {
  width: 181px;
  flex: none;
  margin-left: 7px;
  box-sizing: border-box;
  position: relative;
  display: flex;
  flex-direction: column;
  justify-content: flex-end;
  padding-bottom: 17px;
  border: 2px solid #999;
  border-top-width: 1px;
  background: #fff;
  overflow: hidden;
}
.ct-row { height: 16px; line-height: 16px; flex: none; display: flex; align-items: center; padding-left: 23px; white-space: nowrap; }
.ct-caret { flex: none; }
.ct-dots { width: 8px; height: 1px; margin: 0 1px; background: linear-gradient(to right, #888 50%, transparent 50%) 0 0 / 2px 1px repeat-x; }
.ct-label { margin-left: 5px; }
.ct-row.sub {
  padding-left: 48px;
  background:
    linear-gradient(to bottom, #888 50%, transparent 50%) 29px 0 / 1px 2px repeat-y,
    repeating-linear-gradient(to bottom, #888 0 1px, transparent 1px 2px) 48px 0 / 1px 8px no-repeat;
}
.ct-row.sub .ct-dots { width: 11px; }
.ct-row.sub .ct-label { margin-left: 8px; }
.ct-scroll .thumb { top: auto; height: 81px; bottom: 17px; }
.canvas {
  flex: 1;
  margin: 0 4px 0 5px;
  padding: 0 1px 3px 3px;
  display: flex;
  flex-direction: column;
  background: #fff;
  border: 1px solid #ddd;
  border-top-width: 0;
}
.canvas-top { height: 27px; border-bottom: 1px solid #ddd; background: linear-gradient(#f5f5f5 0 7px, #fff 7px); margin: 0 -1px 0 -3px; }
.canvas-box { flex: 1; margin-top: 4px; border: 1px solid #aaa; background: #fff; }

.statusbar { height: 20px; display: flex; gap: 2px; padding-top: 1px; box-sizing: border-box; background: #f0f0f0; white-space: nowrap; }
.cell { height: 18px; line-height: 17px; background: #fcfcfc; border: 1px solid #ddd; box-sizing: border-box; padding-left: 1px; overflow: hidden; }
.s1 { width: 148px; }
.s2 { width: 78px; }
.s3 { width: 98px; }
.s4 { width: 48px; }
.s5 { width: 913px; }
.s6 { flex: 1; }

.taskbar { height: 40px; display: flex; align-items: center; background: #0a0f12; color: #eee; flex: none; }
.start { width: 48px; height: 40px; display: flex; align-items: center; justify-content: center; background: #000; }
.search {
  width: 344px;
  height: 40px;
  display: flex;
  align-items: center;
  background: #333;
  padding-left: 10px;
  box-sizing: border-box;
  color: #8d8d8d;
  font-size: 14px;
}
.search-text { margin-left: 6px; }
.mic { margin-left: auto; margin-right: 15px; }
.task-icons { display: flex; margin-left: 2px; }
.task-icon { height: 40px; flex: none; display: flex; align-items: center; justify-content: center; position: relative; }
.task-icon.running::after { content: ""; position: absolute; left: 5px; right: 5px; bottom: 0; height: 3px; background: #7db8e8; }
.task-icon.current { background: #2a3238; }
.task-icon.current::after { left: 0; right: 0; }
.tray { flex: 1; display: flex; align-items: center; padding-left: 13px; }
.tray > * { flex: none; }
.tray-link { width: 40px; color: #ddd; }
.cpu { display: flex; flex-direction: column; align-items: center; width: 60px; line-height: 17px; }
.t1 { margin-left: 15px; }
.t2 { margin-left: 10px; }
.t3 { margin-left: 9px; }
.t4 { margin-left: 8px; }
.t5 { margin-left: 3px; }
.t6 { margin-left: 9.500px; }
.tray-ime { margin-left: 10px; font-size: 13px; }
.t7 { margin-left: 13.500px; }
.clock { display: flex; flex-direction: column; align-items: flex-end; margin-left: 13px; width: 64px; line-height: 19px; font-size: 13px; }
.clock-time { margin-right: 8px; }
.notify { margin-left: 19px; }

.badge {
  position: absolute;
  left: 1008px;
  top: -27px;
  width: 46px;
  height: 46px;
  border-radius: 50%;
  box-sizing: border-box;
  border: 2px solid #b9c4bc;
  background: linear-gradient(#3bb24a, #5dc53c);
  color: #fff;
  font-size: 11px;
  font-weight: 700;
  display: flex;
  align-items: flex-end;
  justify-content: center;
  padding-bottom: 3px;
  z-index: 2;
}
.ime {
  position: absolute;
  left: 786px;
  top: 16px;
  width: 190px;
  height: 24px;
  box-sizing: border-box;
  display: flex;
  align-items: center;
  gap: 7px;
  padding-left: 15px;
  background: #fff;
  border: 1px solid #b7c9db;
  z-index: 3;
}
.ime-logo { position: absolute; left: -17px; top: 0; }
.ime-zh { color: #1572bd; font-size: 15px; font-weight: 700; }
.ime-punct { color: #1572bd; font-weight: 700; margin: 0 2px; }

.net {
  position: absolute;
  left: 1075px;
  top: 82px;
  width: 120px;
  height: 50px;
  border-radius: 25px;
  background: #fff;
  box-shadow: 0 3px 8px rgba(60, 70, 80, .35);
  display: flex;
  align-items: center;
  z-index: 5;
}
.net-circle {
  width: 38px;
  height: 38px;
  margin-left: 6px;
  border-radius: 50%;
  background: #26c974;
  display: flex;
  align-items: center;
  justify-content: center;
}
.net-info { margin-left: 6px; display: flex; flex-direction: column; gap: 4px; color: #666; }
.net-line { display: flex; align-items: center; gap: 5px; line-height: 16px; font-size: 11.500px; }

.param {
  position: absolute;
  left: 700px;
  top: 106px;
  width: 510px;
  height: 602px;
  box-sizing: border-box;
  border: 1px solid #555;
  background: linear-gradient(#c4d2e2, #d6e3f1 60px);
  padding: 31px 9px 9px 8px;
  z-index: 4;
}
.param-title { position: absolute; left: 9px; top: 10px; color: #8f9aa5; }
.param-body { height: 100%; display: flex; flex-direction: column; background: #f0f0f0; }
.radios { height: 32px; flex: none; display: flex; align-items: center; padding: 0 0 2px 77px; box-sizing: border-box; gap: 117px; color: #222; }
.radio { display: flex; align-items: center; gap: 2px; white-space: nowrap; }
.radio i {
  width: 13px;
  height: 13px;
  box-sizing: border-box;
  border: 1px solid #444;
  border-radius: 50%;
  background: #fff;
}
.radio.on i { background: radial-gradient(#222 0 3.500px, #fff 4px); }
.param-draw { width: 491px; height: 484px; flex: none; background: #000; display: block; }
.param-foot { flex: 1; display: flex; align-items: center; justify-content: flex-end; padding-right: 25px; }

.btn {
  width: 89px;
  height: 25px;
  box-sizing: border-box;
  border: 1px solid #adadad;
  background: #e1e1e1;
  font: inherit;
  color: #111;
  padding: 0;
}
.btn.primary { border: 2px solid #0078d7; }
.btn.small { width: 73px; height: 23px; }

.dialog {
  position: absolute;
  left: 59px;
  top: 52px;
  width: 636px;
  height: 503px;
  box-sizing: border-box;
  border: 1px solid #3b98e8;
  background: #f0f0f0;
  box-shadow: 0 6px 18px rgba(0, 0, 0, .25);
  display: flex;
  flex-direction: column;
  z-index: 6;
}
.dlg-head { height: 31px; flex: none; display: flex; align-items: center; padding: 0 0 2px 8px; box-sizing: border-box; background: #fff; }
.dlg-head .logo { width: 16px; height: 16px; }
.dlg-title { margin-left: 5px; }
.dlg-btns { margin-left: auto; display: flex; gap: 35px; padding-right: 17px; align-items: center; }
.dlg-body { flex: 1; min-height: 0; display: flex; border-top: 1px solid #777; border-bottom: 1px solid #aaa; margin: 1px 0 0 0; position: relative; }
.gallery {
  flex: 1;
  display: grid;
  grid-template-columns: 302px 303px;
  grid-template-rows: 205px 206px;
  column-gap: 5px;
  row-gap: 5px;
  padding: 4px 0 0 4px;
  overflow: hidden;
}
.shape { background: #000; overflow: hidden; }
.shape svg { width: 100%; height: 100%; display: block; }
.shape.picked { outline: 3px solid #f00; outline-offset: -3px; }
.dlg-scroll {
  width: 16px;
  flex: none;
  margin-right: 1px;
  display: flex;
  flex-direction: column;
  align-items: center;
  padding: 4px 0;
  box-sizing: border-box;
  position: relative;
  justify-content: space-between;
}
.dlg-thumb { position: absolute; left: 0; right: 1px; top: 208px; bottom: 16px; background: #cdcdcd; }
.dlg-foot { height: 47px; flex: none; display: flex; align-items: center; justify-content: flex-end; gap: 15px; padding-right: 34px; }

.ln { fill: none; stroke-width: 1; vector-effect: non-scaling-stroke; shape-rendering: crispEdges; }
.ln.t { stroke-width: 2; }
.w { stroke: #fff; }
.r { stroke: #f00; }
.gr { stroke: #0f0; }
.y { stroke: #ff0; }
.c { stroke: #0ff; }
.m { stroke: #f0f; }
.dots { stroke-dasharray: 1 5; stroke-width: 1; }
.dots2 { stroke-dasharray: 2 7; stroke-width: 1; }
text { font-family: "Noto Sans CJK SC", sans-serif; }
.tw { fill: #fff; }
.tb { fill: #e4f2ff; }
.tg { fill: #0f0; font-family: "Liberation Mono", monospace; font-weight: 700; }
.ttan { fill: #f0d8b0; }
.serif { font-family: "Liberation Serif", serif; }
</style>

<style>
html, body { margin: 0; padding: 0; background: #f0f0f0; }
</style>
